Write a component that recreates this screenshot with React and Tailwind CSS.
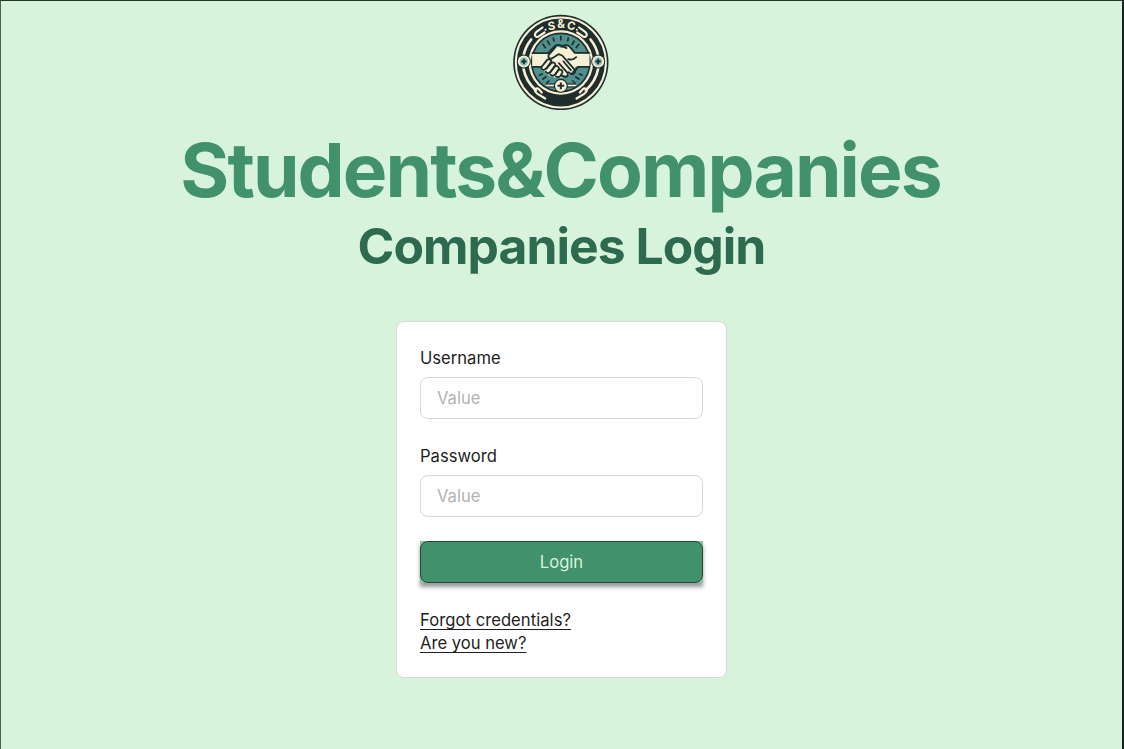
const FONT = "font-['Inter',sans-serif]";

function Logo() {
  const cream = "#f6f0d6";
  const ink = "#1f2e2d";
  const teal = "#50908c";
  return (
    <svg className="mr-px block size-[96px] shrink-0" viewBox="21.5 17.5 288 288" aria-label="S&C">
      <circle cx="165" cy="163" r="143" fill={ink} />
      <circle cx="165" cy="163" r="135" fill="none" stroke={cream} strokeWidth="6" />
      <g fill="none" stroke={cream} strokeLinecap="round">
        <g strokeWidth="8">
          <path d="M76 94A113 113 0 0 0 53 143" />
          <path d="M254 94A113 113 0 0 1 277 143" />
          <path d="M53 182A113 113 0 0 0 90 246" />
          <path d="M277 182A113 113 0 0 1 240 246" />
        </g>
        <g strokeWidth="6.5">
          <path d="M110 58L91 72Q83 81 91 86Q96 88 101 83L116 73" />
          <path d="M220 58L239 72Q247 81 239 86Q234 88 229 83L214 73" />
          <path d="M108 253L98 242Q90 238 87 246Q87 251 95 257L118 271" />
          <path d="M222 253L232 242Q240 238 243 246Q243 251 235 257L212 271" />
        </g>
      </g>
      <circle cx="165" cy="163" r="97" fill={cream} />
      <circle cx="165" cy="163" r="90" fill={ink} />
      <circle cx="165" cy="163" r="85" fill={teal} />
      <g stroke={ink} strokeWidth="5">
        <path d="M165 83V97M142 88L145 100M188 88L185 100M124 97L132 111M206 97L198 111M110 107L120 120M220 107L210 120" />
        <path d="M99 202L111 197M109 214L122 205M231 202L219 197M221 214L208 205M121 226L131 217M209 226L199 217" />
      </g>
      <path d="M79 136H128L148 119Q157 114 166 120L184 114Q194 114 201 125L211 136H251V174H211L194 195Q187 207 177 201Q168 213 158 206Q148 213 141 205Q131 208 128 198Q117 199 116 188Q104 188 108 176L79 174Z" fill={cream} />
      <g fill="none" stroke={ink} strokeWidth="5.5" strokeLinecap="round" strokeLinejoin="round">
        <path d="M80 135H126L148 113Q157 107 169 114Q181 108 190 114L207 134H250" />
        <path d="M80 176H106M250 176H217L200 197" />
        <path d="M149 117L128 141Q126 153 138 151L158 138L169 142L205 183Q211 194 201 198Q195 200 188 192" />
        <path d="M168 113L182 120M211 147Q200 158 187 153" />
        <path d="M112 170L124 155Q132 150 137 159L122 180Q113 190 107 181Q105 177 112 170Z" />
        <path d="M122 181L137 164Q147 160 149 171L134 191Q126 199 120 191" />
        <path d="M134 191L147 175Q157 170 160 182L148 199Q139 207 133 198" />
        <path d="M149 198L158 185Q168 182 170 192L165 202Q158 210 150 205" />
        <path d="M159 165L185 194Q189 204 179 206L166 202M173 160L195 186" />
      </g>
      <path d="M121 232H210" stroke={ink} strokeWidth="12" />
      <path d="M121 232H210" stroke={cream} strokeWidth="5" />
      <circle cx="165" cy="233" r="21" fill={ink} />
      <circle cx="165" cy="233" r="17.5" fill={cream} />
      <path d="M165 223V243M155 233H175" stroke={ink} strokeWidth="6" />
      {[54, 277].map((x) => (
        <g key={x}>
          <circle cx={x} cy="160" r="21" fill={ink} />
          <circle cx={x} cy="160" r="18" fill={cream} />
          <circle cx={x} cy="160" r="12.5" fill="#8fc6c1" />
          <path d={`M${x} 152V168M${x - 8} 160H${x + 8}`} stroke={ink} strokeWidth="5.5" />
        </g>
      ))}
      <g fill={cream} className="font-['Inter',sans-serif] font-bold" fontSize="34" textAnchor="middle">
        <text transform="translate(139 65) rotate(-10)">S</text>
        <text x="166" y="61">&amp;</text>
        <text transform="translate(194 65) rotate(10)">C</text>
      </g>
      <circle cx="119" cy="65" r="3" fill={cream} />
      <circle cx="213" cy="65" r="3" fill={cream} />
    </svg>
  );
}

function Field({ label, type }) {
  return (
    <label className="flex flex-col gap-[7px]">
      <span>{label}</span>
      <input
        type={type}
        placeholder="Value"
        className="h-[42px] w-full rounded-[8px] border border-[#d9d9d9] bg-white px-4 leading-none outline-none placeholder:text-[#b3b3b3]"
      />
    </label>
  );
}

export default function App() {
  return (
    <main className={`${FONT} flex h-[749px] w-full flex-col items-center overflow-hidden border-t border-r-2 border-l border-t-[#26352b] border-r-[#16241c] border-l-[#4c6354] bg-[#d7f3dc] pt-[13px]`}>
      <Logo />
      <h1 className="mt-[15.5px] pr-[2px] text-[74.8px] leading-[89.5px] font-bold tracking-[-1.88px] text-[#40916c]">
        Students&amp;Companies
      </h1>
      <h2 className="mt-px text-[49.8px] leading-[60px] font-bold tracking-[-0.95px] text-[#2d6a4f]">
        Companies Login
      </h2>
      <form className="mt-[45px] flex w-[331px] flex-col rounded-[8px] border border-[#d9d9d9] bg-white px-[23px] pt-[25px] pb-[22px] text-[16.6px] leading-[23px] text-[#1e1e1e]">
        <div className="flex flex-col gap-[26px]">
          <Field label="Username" type="text" />
          <Field label="Password" type="password" />
        </div>
        <div className="mt-6 h-[42px] bg-[#8dbda4] shadow-[0_4px_4px_rgba(0,0,0,0.4)]">
          <button
            type="button"
            className="flex h-[42px] w-full items-center justify-center rounded-[8px] border border-[#1f4a37] bg-[#40916c] pt-px text-[#d8f3dc]"
          >
            Login
          </button>
        </div>
        <div className="mt-[26px] flex flex-col items-start">
          <a href="#forgot" className="tracking-[0.05px] underline decoration-1 underline-offset-[3px] [text-decoration-skip-ink:none]">Forgot credentials?</a>
          <a href="#new" className="underline decoration-1 underline-offset-[3px] [text-decoration-skip-ink:none]">Are you new?</a>
        </div>
      </form>
    </main>
  );
}
